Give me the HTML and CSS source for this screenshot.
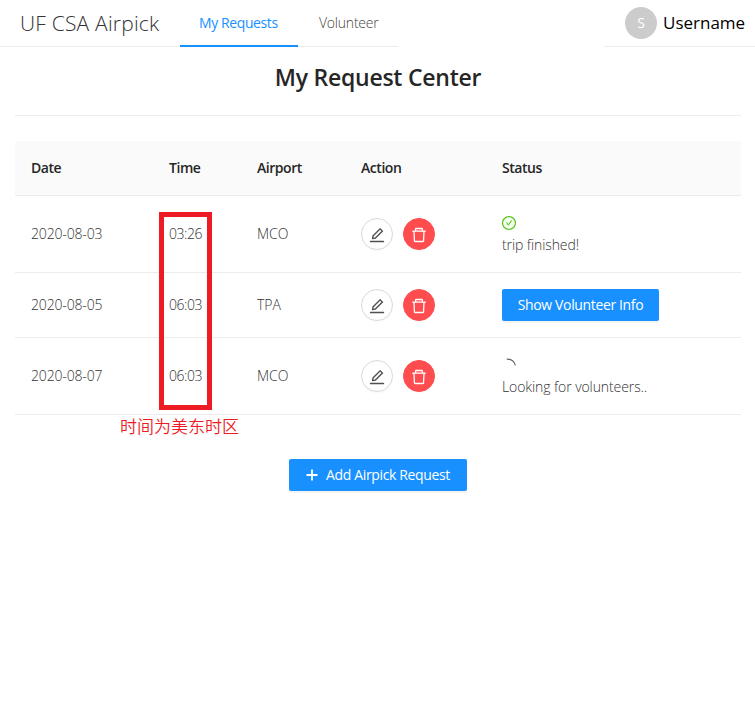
FILE: index.html
```html
<!DOCTYPE html>
<html lang="en">
<head>
<meta charset="utf-8">
<title>UF CSA Airpick</title>
<link rel="stylesheet" href="styles.css">
</head>
<body>
<svg width="0" height="0" class="defs" aria-hidden="true">
<symbol id="edit" viewBox="64 64 896 896"><path d="M257.7 752c2 0 4-.2 6-.5L431.9 722c2-.4 3.9-1.3 5.3-2.8l423.9-423.9a9.96 9.96 0 000-14.1L694.9 114.9c-1.9-1.9-4.4-2.9-7.1-2.9s-5.2 1-7.1 2.9L256.8 538.8c-1.5 1.5-2.4 3.3-2.8 5.3l-29.5 168.2a33.5 33.5 0 009.4 29.8c6.6 6.4 14.9 9.9 23.8 9.9zm67.4-174.4L687.8 215l73.3 73.3-362.7 362.6-88.9 15.7 15.6-89zM880 836H144c-17.7 0-32 14.3-32 32v36c0 4.4 3.6 8 8 8h784c4.4 0 8-3.6 8-8v-36c0-17.7-14.3-32-32-32z"/></symbol>
<symbol id="delete" viewBox="64 64 896 896"><path d="M360 184h-8c4.4 0 8-3.6 8-8v8h304v-8c0 4.4 3.6 8 8 8h-8v72h72v-80c0-35.3-28.7-64-64-64H352c-35.3 0-64 28.7-64 64v80h72v-72zm504 72H160c-17.7 0-32 14.3-32 32v32c0 4.4 3.6 8 8 8h60.4l24.7 523c1.6 34.1 29.8 61 63.9 61h454c34.2 0 62.3-26.8 63.9-61l24.7-523H888c4.4 0 8-3.6 8-8v-32c0-17.7-14.3-32-32-32zM731.3 840H292.7l-24.2-512h487l-24.2 512z"/></symbol>
</svg>
<header class="header">
  <div class="bar">
    <div class="brand"><span>UF CSA Airpick</span></div>
    <nav class="menu">
      <a class="item active"><span>My Requests</span></a>
      <a class="item second"><span>Volunteer</span></a>
    </nav>
  </div>
  <div class="user"><span class="avatar">S</span><span class="name">Username</span></div>
</header>
<main class="main">
  <h1 class="title"><span>My Request Center</span></h1>
  <div class="table">
    <div class="row head">
      <div>Date</div><div>Time</div><div>Airport</div><div>Action</div><div>Status</div>
    </div>
    <div class="row tall">
      <div><span class="date">2020-08-03</span></div><div><span class="time">03:26</span></div><div><span class="code">MCO</span></div>
      <div class="actions"><button class="round"><svg><use href="#edit"/></svg></button><button class="round danger"><svg><use href="#delete"/></svg></button></div>
      <div class="status">
        <svg class="check" viewBox="64 64 896 896"><circle cx="512" cy="512" r="400" fill="#f6ffed"/><path d="M699 353h-46.9c-10.2 0-19.9 4.9-25.9 13.3L469 584.3l-71.2-98.8c-6-8.3-15.6-13.3-25.9-13.3H325c-6.5 0-10.3 7.4-6.5 12.7l124.6 172.8a31.8 31.8 0 0051.7 0l210.6-292c3.9-5.3.1-12.7-6.4-12.7z"/><path d="M512 64C264.6 64 64 264.6 64 512s200.6 448 448 448 448-200.6 448-448S759.4 64 512 64zm0 820c-205.4 0-372-166.6-372-372s166.6-372 372-372 372 166.6 372 372-166.6 372-372 372z"/></svg>
        <span class="message">trip finished!</span>
      </div>
    </div>
    <div class="row short">
      <div><span class="date">2020-08-05</span></div><div><span class="time">06:03</span></div><div><span class="code">TPA</span></div>
      <div class="actions"><button class="round"><svg><use href="#edit"/></svg></button><button class="round danger"><svg><use href="#delete"/></svg></button></div>
      <div><button class="primary info"><span>Show Volunteer Info</span></button></div>
    </div>
    <div class="row tall">
      <div><span class="date">2020-08-07</span></div><div><span class="time">06:03</span></div><div><span class="code">MCO</span></div>
      <div class="actions"><button class="round"><svg><use href="#edit"/></svg></button><button class="round danger"><svg><use href="#delete"/></svg></button></div>
      <div class="status">
        <svg class="spin" viewBox="0 0 16 14"><path d="M4.8 1.2Q11.3 .8 13.4 7.4" fill="none" stroke="#666" stroke-width="1.2"/></svg>
        <span class="message">Looking for volunteers..</span>
      </div>
    </div>
    <div class="marker"></div>
    <div class="note">时间为美东时区</div>
  </div>
  <button class="primary add"><svg viewBox="0 0 12 12"><path d="M6 .5v11M.5 6h11" stroke="#fff" stroke-width="1.8"/></svg><span>Add Airpick Request</span></button>
</main>
</body>
</html>
```

FILE: styles.css
```css
* { box-sizing: border-box; }
body { margin: 0; height: 711px; background: #fff; overflow: hidden; color: #595959; font: 14px/22px "Open Sans", "Noto Sans", sans-serif; }
.defs { position: absolute; }
span { white-space: nowrap; }
button { font: inherit; padding: 0; border: 0; }
.header { display: flex; justify-content: space-between; height: 47px; }
.bar { display: flex; width: 398px; border-bottom: 1px solid #ececec; }
.brand { flex: none; width: 180px; padding-left: 20px; font-size: 21px; line-height: 47px; font-weight: 300; color: #333; letter-spacing: .2px; }
.menu { display: flex; height: 47px; line-height: 45px; color: #444; }
.item { flex: none; padding: 0 20px; }
.active { width: 118px; padding-left: 19px; color: #1890ff; letter-spacing: -.4px; border-bottom: 2px solid #1890ff; }
.second { font-weight: 300; letter-spacing: -.22px; padding-left: 21px; }
.user { display: flex; align-items: center; width: 151px; padding-left: 21px; border-bottom: 1px solid #ececec; color: #000; font-size: 17px; }
.avatar { width: 32px; height: 32px; margin-right: 6px; border-radius: 50%; background: #ccc; color: #fff; font-size: 14px; line-height: 32px; text-align: center; }
.main { padding: 0 14px 0 15px; display: flex; flex-direction: column; align-items: center; }
.title { width: 100%; height: 69px; margin: 0 0 25px; padding-top: 14px; border-bottom: 1px solid #ececec; font-size: 23px; line-height: 32px; font-weight: 600; letter-spacing: -.25px; text-align: center; color: #262626; }
.table { position: relative; width: 726px; }
.row { display: grid; grid-template-columns: 138px 88px 104px 141px 255px; align-items: center; border-bottom: 1px solid #ececec; font-weight: 300; color: #333; }
.row > div { padding-left: 16px; }
.head { height: 55px; background: #fafafa; font-weight: 600; letter-spacing: -.45px; color: #262626; }
.tall { height: 77px; }
.short { height: 65px; }
.date { letter-spacing: -.16px; }
.time { letter-spacing: -.45px; }
.message { letter-spacing: -.09px; }
.actions { display: flex; gap: 10px; }
.round { display: flex; align-items: center; justify-content: center; width: 32px; height: 32px; padding-top: 1px; border: 1px solid #d9d9d9; border-radius: 50%; background: #fff; box-shadow: 0 2px 0 rgba(0,0,0,.016); }
.round svg { width: 16px; height: 16px; fill: #505050; }
.danger { background: #ff4d4f; border-color: #ff4d4f; }
.danger svg { fill: #fff; }
.status { display: flex; flex-direction: column; align-items: flex-start; }
.check { width: 14px; height: 14px; margin: 4px 0; fill: #52c41a; }
.spin { width: 16px; height: 14px; margin: 4px 0; }
.primary { display: flex; align-items: center; justify-content: center; height: 32px; border-radius: 2px; background: #1890ff; color: #fff; font-weight: 400; letter-spacing: -.36px; box-shadow: 0 2px 0 rgba(0,0,0,.045); }
.info { width: 157px; }
.add { width: 178px; margin-top: 44px; gap: 8px; }
.add svg { width: 12px; height: 12px; }
.marker { position: absolute; left: 144px; top: 71px; width: 53px; height: 198px; border: 5px solid #ed1c24; }
.note { position: absolute; left: 105px; top: 273px; color: #ed1c24; font: 350 17px/24px "Noto Sans CJK SC", sans-serif; white-space: nowrap; }
```
